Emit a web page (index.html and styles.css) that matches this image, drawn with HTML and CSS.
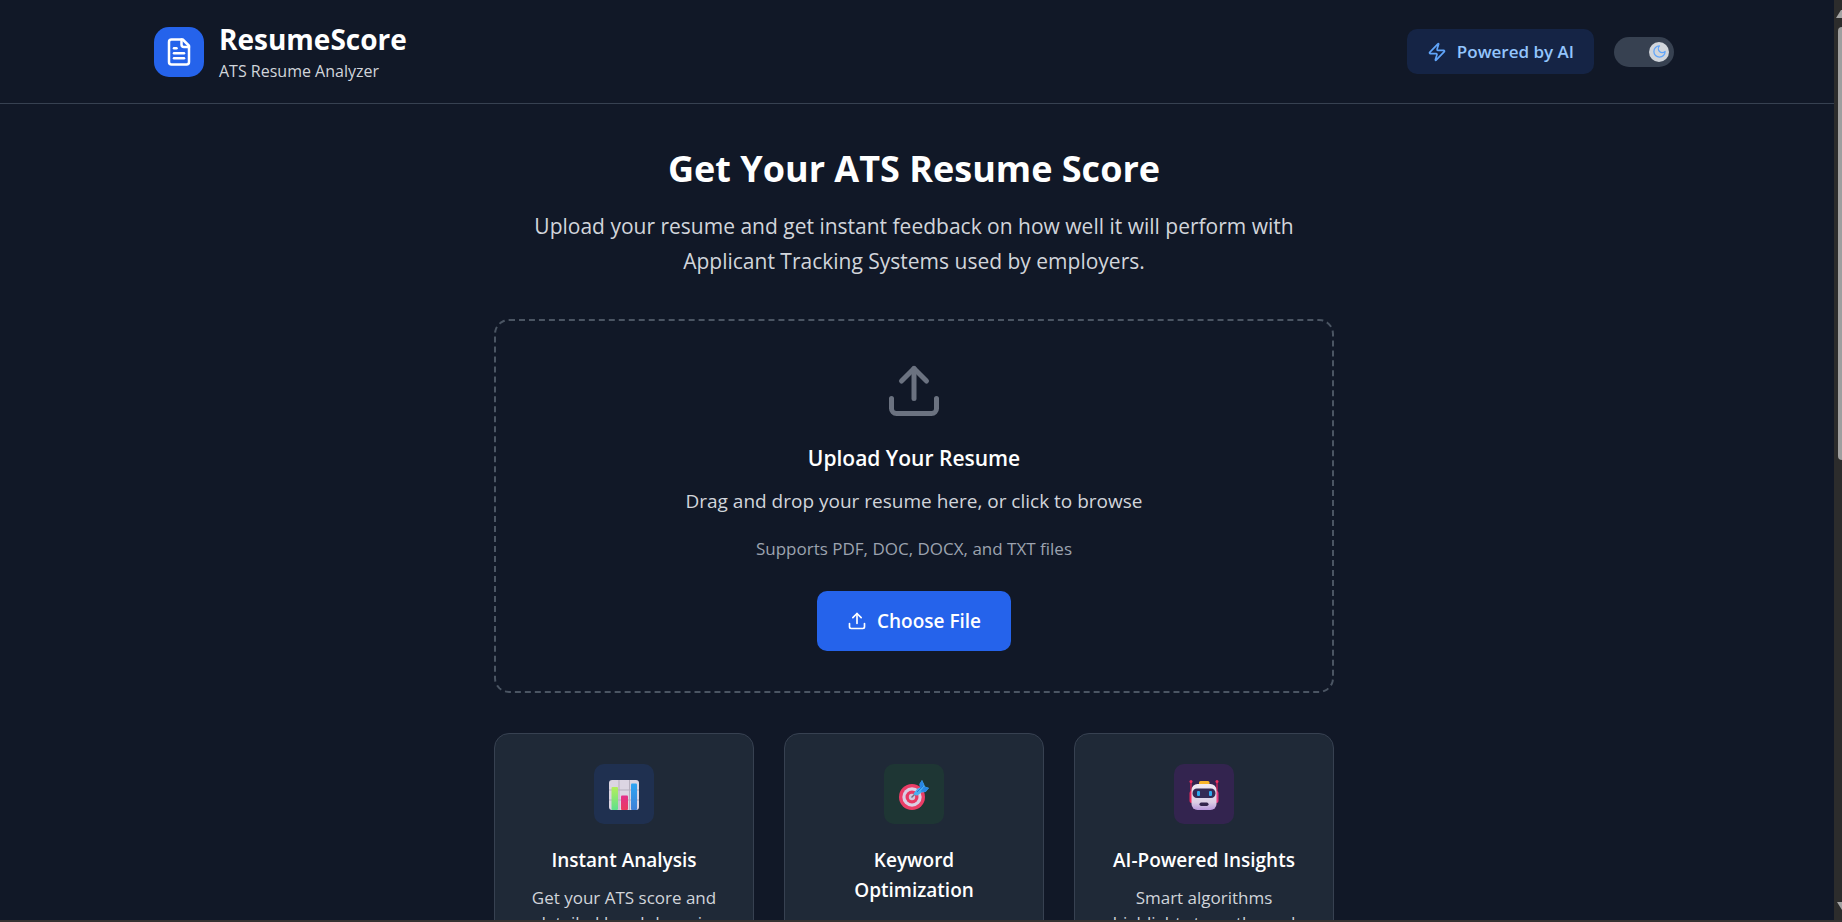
FILE: index.html
```html
<!DOCTYPE html>
<html lang="en">
<head>
<meta charset="utf-8">
<title>ResumeScore</title>
<link rel="stylesheet" href="styles.css">
</head>
<body>
<div class="window">
  <div class="page">
    <header class="header">
      <div class="header-inner">
        <div class="brand">
          <span class="brand-logo">
            <svg class="icon-brand" viewBox="0 0 24 24" fill="none" stroke="currentColor" stroke-width="2" stroke-linecap="round" stroke-linejoin="round" aria-hidden="true"><path d="M15 2H6a2 2 0 0 0-2 2v16a2 2 0 0 0 2 2h12a2 2 0 0 0 2-2V7Z"/><path d="M14 2v4a2 2 0 0 0 2 2h4"/><path d="M10 9H8"/><path d="M16 13H8"/><path d="M16 17H8"/></svg>
          </span>
          <div>
            <div class="brand-name">ResumeScore</div>
            <div class="brand-sub">ATS Resume Analyzer</div>
          </div>
        </div>
        <div class="header-actions">
          <div class="badge">
            <svg class="icon-small" viewBox="0 0 24 24" fill="none" stroke="currentColor" stroke-width="2" stroke-linecap="round" stroke-linejoin="round" aria-hidden="true"><path d="M4 14a1 1 0 0 1-.78-1.63l9.9-10.2a.5.5 0 0 1 .86.46l-1.92 6.02A1 1 0 0 0 13 10h7a1 1 0 0 1 .78 1.63l-9.9 10.2a.5.5 0 0 1-.86-.46l1.92-6.02A1 1 0 0 0 11 14z"/></svg>
            <span>Powered by AI</span>
          </div>
          <button class="toggle" type="button" aria-label="Toggle dark mode">
            <span class="toggle-knob">
              <svg class="icon-moon" viewBox="0 0 24 24" fill="none" stroke="currentColor" stroke-width="2" stroke-linecap="round" stroke-linejoin="round" aria-hidden="true"><path d="M12 3a6 6 0 0 0 9 9 9 9 0 1 1-9-9Z"/></svg>
            </span>
          </button>
        </div>
      </div>
    </header>
    <main class="main">
      <h1 class="title">Get Your ATS Resume Score</h1>
      <p class="lead">Upload your resume and get instant feedback on how well it will perform with Applicant Tracking Systems used by employers.</p>
      <section class="dropzone">
        <svg class="icon-upload" viewBox="0 0 24 24" fill="none" stroke="currentColor" stroke-width="2" stroke-linecap="round" stroke-linejoin="round" aria-hidden="true"><path d="M21 15v4a2 2 0 0 1-2 2H5a2 2 0 0 1-2-2v-4"/><path d="m17 8-5-5-5 5"/><path d="M12 3v12"/></svg>
        <h2 class="drop-title">Upload Your Resume</h2>
        <p class="drop-text">Drag and drop your resume here, or click to browse</p>
        <p class="drop-note">Supports PDF, DOC, DOCX, and TXT files</p>
        <button class="choose" type="button">
          <svg class="icon-small" viewBox="0 0 24 24" fill="none" stroke="currentColor" stroke-width="2" stroke-linecap="round" stroke-linejoin="round" aria-hidden="true"><path d="M21 15v4a2 2 0 0 1-2 2H5a2 2 0 0 1-2-2v-4"/><path d="m17 8-5-5-5 5"/><path d="M12 3v12"/></svg>
          <span>Choose File</span>
        </button>
      </section>
      <section class="cards">
        <article class="card">
          <div class="tile tile-blue">
            <svg class="icon-tile" viewBox="0 0 30 30" aria-hidden="true">
              <defs>
                <linearGradient id="g-green" x1="0" y1="0" x2="0" y2="1"><stop offset="0" stop-color="#b4ee5c"/><stop offset="1" stop-color="#5fe08c"/></linearGradient>
                <linearGradient id="g-pink" x1="0" y1="0" x2="0" y2="1"><stop offset="0" stop-color="#e3308c"/><stop offset="1" stop-color="#ea3a5e"/></linearGradient>
                <linearGradient id="g-blue" x1="0" y1="0" x2="0" y2="1"><stop offset="0" stop-color="#2fa5f4"/><stop offset="1" stop-color="#3f7fd6"/></linearGradient>
              </defs>
              <rect width="30" height="30" rx="3" fill="#dcd5e3"/>
              <path d="M10 0v30M20.500 0v30M0 10h30M0 20h30" stroke="#b5aebd" stroke-width="1"/>
              <rect x="2.500" y="7" width="6.500" height="23" rx="1" fill="url(#g-green)"/>
              <rect x="12" y="15.500" width="7" height="14.500" rx="1" fill="url(#g-pink)"/>
              <rect x="22" y="3.500" width="6" height="26.500" rx="1" fill="url(#g-blue)"/>
            </svg>
          </div>
          <h3 class="card-title">Instant Analysis</h3>
          <p class="card-text">Get your ATS score and detailed breakdown in seconds</p>
        </article>
        <article class="card">
          <div class="tile tile-green">
            <svg class="icon-tile" viewBox="0 0 30 30" aria-hidden="true">
              <circle cx="13" cy="17" r="13" fill="#ea3d66"/>
              <circle cx="13" cy="17" r="9.700" fill="#d9cfe4"/>
              <circle cx="13" cy="17" r="6.500" fill="#e93963"/>
              <circle cx="13" cy="17" r="3.200" fill="#d2c5da"/>
              <path d="m12.500 17.500 5-5" stroke="#6f6c86" stroke-width="1.500"/>
              <path d="m14.500 13.500 4-5 2.500-1-.5-3.500L23 0l2 4 1 2.500 4 1.500-3.500 4-4 .5-4 3q-3 .5-4-2z" fill="#48aff0"/>
              <path d="m20.500 4 2.500-4 2 5-3.500 4zM25 6.500l5 1.500-3.500 4-5-.5z" fill="#2887e5"/>
              <path d="m18 12 6-6" stroke="#2878d8" stroke-width="1"/>
            </svg>
          </div>
          <h3 class="card-title">Keyword Optimization</h3>
          <p class="card-text">See which keywords you're missing</p>
        </article>
        <article class="card">
          <div class="tile tile-purple">
            <svg class="icon-tile" viewBox="0 0 30 30" aria-hidden="true">
              <defs>
                <linearGradient id="g-face" x1="0" y1="0" x2="0" y2="1"><stop offset="0" stop-color="#f1eaf3"/><stop offset=".7" stop-color="#dccfe5"/><stop offset="1" stop-color="#b998dc"/></linearGradient>
              </defs>
              <path d="M2 1.500V21M28 1.500V21" stroke="#dd2458" stroke-width="1.300"/>
              <circle cx="2" cy="1.500" r="1.500" fill="#f0305f"/><circle cx="28" cy="1.500" r="1.500" fill="#f0305f"/>
              <rect x=".5" y="11" width="4" height="12" rx="2" fill="#ee2b5f"/><rect x="25.500" y="11" width="4" height="12" rx="2" fill="#e83a80"/>
              <rect x="10" y="1" width="10.500" height="4" rx="1.500" fill="#f9b52a"/>
              <rect x="2.500" y="4" width="25" height="26" rx="6" fill="url(#g-face)"/>
              <rect x="3.500" y="8.500" width="23" height="9.500" rx="4.500" fill="#342a55"/>
              <rect x="8" y="11" width="3" height="5" rx="1" fill="#2fa9ef"/><rect x="20" y="11" width="3" height="5" rx="1" fill="#2fa9ef"/>
              <rect x="10.500" y="22.500" width="9" height="3.500" rx="1.700" fill="#33254c"/>
            </svg>
          </div>
          <h3 class="card-title">AI-Powered Insights</h3>
          <p class="card-text">Smart algorithms highlight strengths and improvements</p>
        </article>
      </section>
    </main>
  </div>
  <div class="scrollbar" aria-hidden="true">
    <svg class="arrow" viewBox="0 0 8 8"><path d="M2 8 7 0h1v8z" fill="#a3a3a3"/></svg>
    <div class="track"><div class="thumb"></div></div>
    <svg class="arrow" viewBox="0 0 8 8"><path d="M3 0h5v8z" fill="#a3a3a3"/></svg>
  </div>
</div>
</body>
</html>
```
FILE: styles.css
```css
* {
  box-sizing: border-box;
}

body {
  margin: 0;
  background: #111827;
  color: #fff;
  font-family: "Segoe UI", "Open Sans", "Noto Sans", sans-serif;
}

h1, h2, h3, p {
  margin: 0;
}

button {
  border: 0;
  padding: 0;
  font: inherit;
  color: inherit;
  cursor: pointer;
}

.window {
  display: flex;
  height: 100vh;
  overflow: hidden;
  border-bottom: 2px solid #353232;
}

.page {
  flex: 1;
  min-width: 0;
  overflow: hidden;
}

.header {
  padding: 19px 6px 19px 0;
  border-bottom: 1px solid #374151;
}

.header-inner {
  display: flex;
  align-items: center;
  justify-content: space-between;
  max-width: 1600px;
  margin: 0 auto;
  padding: 0 40px;
}

.brand {
  display: flex;
  align-items: center;
  gap: 15px;
}

.brand-logo {
  display: grid;
  place-items: center;
  width: 50px;
  height: 50px;
  border-radius: 15px;
  background: #2563eb;
}

.icon-brand {
  width: 30px;
  height: 30px;
}

.brand-name {
  font-size: 28px;
  line-height: 40px;
  font-weight: 700;
}

.brand-sub {
  font-size: 16px;
  line-height: 25px;
  color: #d1d5db;
}

.header-actions {
  display: flex;
  align-items: center;
  gap: 20px;
}

.badge {
  display: flex;
  align-items: center;
  gap: 10px;
  height: 45px;
  padding: 0 20px;
  border-radius: 10px;
  background: #152445;
  color: #93c5fd;
  font-size: 17px;
  font-weight: 600;
}

.icon-small {
  width: 20px;
  height: 20px;
}

.badge .icon-small {
  color: #60a5fa;
}

.toggle {
  display: flex;
  align-items: center;
  justify-content: flex-end;
  width: 60px;
  height: 30px;
  padding: 0 5px;
  border-radius: 15px;
  background: #374151;
}

.toggle-knob {
  display: grid;
  place-items: center;
  width: 20px;
  height: 20px;
  border-radius: 50%;
  background: #d1d5db;
  color: #60a5fa;
}

.icon-moon {
  width: 15px;
  height: 15px;
}

.main {
  padding: 42px 6px 40px 0;
  text-align: center;
}

.title {
  font-size: 36px;
  line-height: 45px;
  font-weight: 700;
}

.lead {
  max-width: 840px;
  margin: 18px auto 40px;
  padding: 0 20px;
  font-size: 21px;
  line-height: 35px;
  color: #d1d5db;
}

.dropzone {
  display: flex;
  flex-direction: column;
  align-items: center;
  max-width: 840px;
  margin: 0 auto 40px;
  padding: 40px;
  border: 2px dashed #4b5563;
  border-radius: 15px;
}

.icon-upload {
  width: 60px;
  height: 60px;
  color: #6b7280;
}

.drop-title {
  margin: 20px 0 10px;
  font-size: 21px;
  line-height: 35px;
  font-weight: 600;
}

.drop-text {
  margin-bottom: 20px;
  font-size: 19px;
  line-height: 30px;
  color: #d1d5db;
}

.drop-note {
  margin-bottom: 30px;
  font-size: 17px;
  line-height: 25px;
  color: #9ca3af;
}

.choose {
  display: flex;
  align-items: center;
  gap: 10px;
  height: 60px;
  padding: 0 30px;
  border-radius: 10px;
  background: #2563eb;
  color: #fff;
  font-size: 19px;
  font-weight: 600;
}

.cards {
  display: grid;
  grid-template-columns: repeat(3, 1fr);
  gap: 30px;
  max-width: 840px;
  margin: 0 auto;
}

.card {
  padding: 30px;
  border: 1px solid #374151;
  border-radius: 15px;
  background: #1f2937;
}

.tile {
  display: grid;
  place-items: center;
  width: 60px;
  height: 60px;
  margin: 0 auto 21px;
  padding-top: 2px;
  border-radius: 10px;
}

.tile-blue {
  background: #1f3050;
}

.tile-green {
  background: #1e3634;
}

.tile-purple {
  background: #33244f;
}

.icon-tile {
  width: 30px;
  height: 30px;
}

.card-title {
  margin-bottom: 10px;
  font-size: 19px;
  line-height: 30px;
  font-weight: 600;
}

.card-text {
  font-size: 17px;
  line-height: 25px;
  color: #d1d5db;
}

.scrollbar {
  display: flex;
  flex-direction: column;
  justify-content: space-between;
  width: 8px;
  padding: 10px 0;
  background: #2c2c2c;
}

.arrow {
  width: 8px;
  height: 8px;
}

.track {
  flex: 1;
  padding: 9px 0 9px 4px;
}

.thumb {
  height: 50%;
  border-radius: 4px 0 0 4px;
  background: #9f9f9f;
}
```
